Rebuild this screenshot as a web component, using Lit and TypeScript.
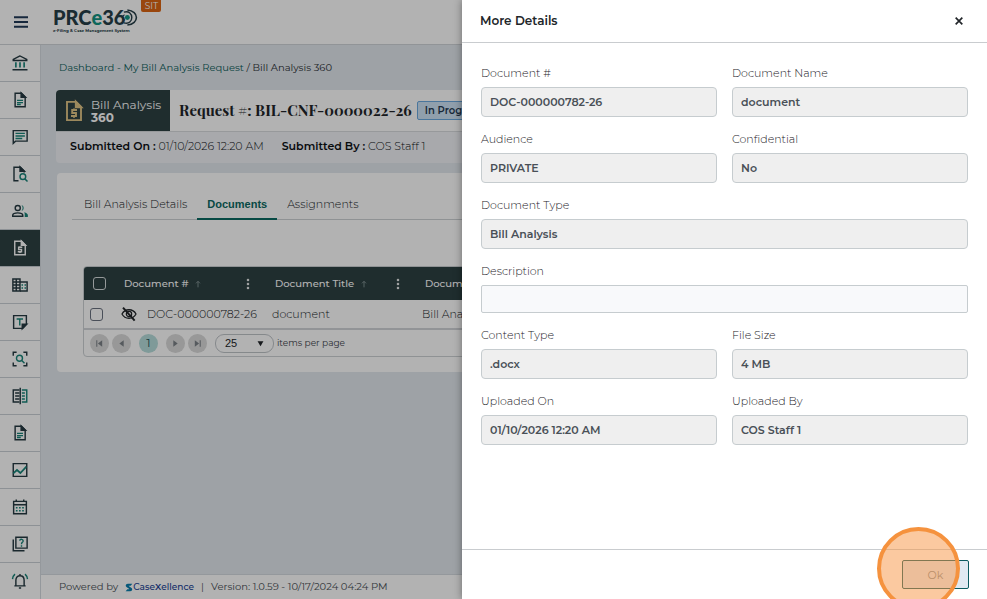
import { LitElement, html, svg, css, SVGTemplateResult } from "lit";
import { customElement, property } from "lit/decorators.js";
import { classMap } from "lit/directives/class-map.js";

const page = svg`<path d="M14 2.9H5.5V21.1H18.9V8z"/><path d="M13.5 2.5V8.5H19.5z" fill="currentColor"/>`;

const ICONS: Record<string, SVGTemplateResult> = {
  court: svg`<path d="M12 2.6 3 7.2V8.6H21V7.2z"/><path class="accent" d="M6.5 11V18M12 11V18M17.5 11V18" stroke-width="2.2"/><path d="M2 21H22" stroke-width="2"/>`,
  page: svg`${page}<path class="accent" d="M8 12.5H16M8 15.5H16M8 18H13"/>`,
  chat: svg`<path d="M3 3.5H21.5V17.5H6L3 20.5z"/><path class="accent" d="M6 7.2H18.5M6 10.6H18.5M6 14H15"/>`,
  pageSearch: svg`<path d="M10 21H4V3H12.5L17.5 8V10"/><path d="M12 2.5V8.5H18z" fill="currentColor"/><circle class="accent" cx="15.8" cy="15.5" r="3.8"/><path class="accent" d="M18.5 18.5 22 22"/>`,
  people: svg`<circle cx="9" cy="8" r="3.4"/><path d="M2.3 19V17.5C2.8 13.5 15.2 13.5 15.7 17.5V19z"/><path class="accentFill" d="M14 4a4.2 4.2 0 0 1 0 8c2-2.4 2-5.6 0-8zM17.5 13.5c3 .8 5 2 5 4.3V20H18.3V17.5c0-1.8 0-2.7-.8-4z"/>`,
  bill: svg`<path d="M14 2.9H5V21.1H19V8z"/><path d="M13.8 2.5V8.3H19.5z" fill="currentColor"/><path d="M15 11H10.2V14H14V17H9M12 9.5V11M12 17V18.7"/>`,
  building: svg`<path d="M2.5 4H12V20H2.5zM2.5 8H12M2.5 12H12M2.5 16H12M7 4V20"/><path d="M12 8H21.5V20H12"/><path class="accent" d="M14 12H16M18 12H20M14 16H16M18 16H20"/>`,
  note: svg`<path d="M3.5 3.5H20.5V15L15.5 20.5H3.5z"/><path d="M15 21V15H21z" fill="currentColor"/><path class="accent" d="M7.5 8H16M11.7 8V16.5"/>`,
  scan: svg`<path d="M3 7.5V3H7.5M16.5 3H21V7.5M21 16.5V21H16.5M7.5 21H3V16.5"/><circle class="accent" cx="11.3" cy="11" r="4"/><path class="accent" d="M14.3 14 18 17.7"/>`,
  compare: svg`<path d="M11 4H3V20H11M5.5 8H11M5.5 12H11M5.5 16H11M12.3 1V23"/><path class="accent" d="M14.5 4H21V20H14.5M14.5 8H18.5M14.5 12H18.5M14.5 16H18.5"/>`,
  chart: svg`<path d="M3 3.5H21V20.5H3z"/><path class="accent" d="M3 16.5 8 12 12.5 16 20.5 7.5" stroke-width="2.3"/>`,
  calendar: svg`<path d="M3.5 4.5H20.5V21H3.5zM3.5 9H20.5M7 2V5M17 2V5"/><path class="accent" d="M6.5 13H17.5M6.5 17H17.5" stroke-dasharray="2.2 2"/>`,
  help: svg`<path d="M6.5 3H21.5V17.5H6.5z"/><path d="M3 6V21H18"/><path class="accent" d="M11.5 7.5C12.5 4.5 17 5.7 16 8.7 15.3 10 14 10 14 12.2M14 13.7V15.5"/>`,
  bell: svg`<path d="M4.5 18.5H19.5M6.5 18V11C6.5 3 17.5 3 17.5 11V18M12 2.5V5M10.5 21.3H13.5"/><path class="accent" d="M2 9.5C2.2 6.5 3.3 4.5 5.3 2.8M22 9.5C21.8 6.5 20.7 4.5 18.7 2.8"/>`,
  hidden: svg`<path d="M1.5 12C6 3.5 18 3.5 22.5 12 18 20.5 6 20.5 1.5 12z"/><circle cx="12" cy="12" r="4"/><path d="M3 2.5 20.5 22" stroke-width="3"/>`,
  first: svg`<path d="M17 6 9 12 17 18z" fill="currentColor" stroke="none"/><path d="M7 6V18"/>`,
  prev: svg`<path d="M16 6 8 12 16 18z" fill="currentColor" stroke="none"/>`,
  next: svg`<path d="M8 6 16 12 8 18z" fill="currentColor" stroke="none"/>`,
  last: svg`<path d="M7 6 15 12 7 18z" fill="currentColor" stroke="none"/><path d="M17 6V18"/>`,
  down: svg`<path d="M2 4H22L12 21z" fill="currentColor" stroke="none"/>`,
  up: svg`<path d="M12 22V4M6 10 12 4 18 10" stroke-width="2.5"/>`,
  dots: svg`<circle cx="12" cy="4" r="1.7" fill="currentColor"/><circle cx="12" cy="12" r="1.7" fill="currentColor"/><circle cx="12" cy="20" r="1.7" fill="currentColor"/>`,
  menu: svg`<path d="M1.5 5H22.5M1.5 12H22.5M1.5 19H22.5" stroke-width="3"/>`,
  close: svg`<path d="M4 4 20 20M20 4 4 20" stroke-width="4"/>`,
  ring: svg`<circle class="accentFill" cx="9" cy="12" r="3.5"/><path d="M4 4.5C19 0 19 24 4 19.5" stroke-width="2"/><path d="M9 1.5C26 3 26 21 9 22.5" stroke-width="2.2"/><path d="M5 8C1 10 1 14 5 16" stroke-width="1.6"/>`,
  spark: svg`<path d="M22 1H9C3 1 1 6 3 9L7 13H17L11 7H17zM2 23H15C21 23 23 18 21 15L17 11H7L13 17H7z" fill="currentColor" stroke="none"/>`,
};

@customElement("ui-icon")
class UiIcon extends LitElement {
  @property() name = "";
  static styles = css`
    :host { display: inline-flex; width: 16px; height: 16px; flex: none; }
    svg { width: 100%; height: 100%; fill: none; stroke: currentColor; stroke-width: 1.9; }
    .accent { stroke: var(--accent, currentColor); }
    .accentFill { fill: var(--accent, currentColor); stroke: none; }
  `;
  render() {
    return html`<svg viewBox="0 0 24 24" aria-hidden="true">${ICONS[this.name]}</svg>`;
  }
}

interface Field { id: string; label: string; value: string; wide?: boolean; editable?: boolean; }

const FIELDS: Field[] = [
  { id: "doc-number", label: "Document #", value: "DOC-000000782-26" },
  { id: "doc-name", label: "Document Name", value: "document" },
  { id: "audience", label: "Audience", value: "PRIVATE" },
  { id: "confidential", label: "Confidential", value: "No" },
  { id: "doc-type", label: "Document Type", value: "Bill Analysis", wide: true },
  { id: "description", label: "Description", value: "", wide: true, editable: true },
  { id: "content-type", label: "Content Type", value: ".docx" },
  { id: "file-size", label: "File Size", value: "4 MB" },
  { id: "uploaded-on", label: "Uploaded On", value: "01/10/2026 12:20 AM" },
  { id: "uploaded-by", label: "Uploaded By", value: "COS Staff 1" },
];

@customElement("details-drawer")
class DetailsDrawer extends LitElement {
  static styles = css`
    :host { display: flex; flex-direction: column; background: #fff; color: #3d444b; box-shadow: 0 0 8px rgba(0, 0, 0, .4); }
    header { display: flex; align-items: center; justify-content: space-between; height: 42px; padding: 0 23px 0 18px; border-bottom: 1px solid #c9cccf; }
    h2 { margin: 0; font-size: 12px; font-weight: 600; color: #212529; }
    button { font: inherit; cursor: pointer; }
    .close { display: flex; padding: 0; border: 0; background: none; color: #212529; }
    .close ui-icon { width: 10px; height: 10px; }
    .fields { flex: 1; display: grid; grid-template-columns: 1fr 1fr; align-content: start; gap: 14px 15px; padding: 22px 19px; }
    .field { display: flex; flex-direction: column; gap: 6px; min-width: 0; }
    .wide { grid-column: 1 / -1; }
    label { font-size: 11px; font-weight: 300; line-height: 16px; color: #1c2228; }
    input { box-sizing: border-box; width: 100%; height: 30px; padding: 0 8px; border: 1px solid #c6cccf; border-radius: 4px; background: #efefef; font: 600 11px/16px var(--sans); color: #495057; }
    input.editable { height: 28px; border-radius: 2px; background: #f8f9fb; }
    footer { position: relative; display: flex; justify-content: flex-end; height: 39px; padding: 10px 18px 0; border-top: 1px solid #c9cccf; }
    .ok { width: 67px; height: 29px; border: 1px solid #0b5a60; border-radius: 2px; background: #e0e9f2; color: #7c8a92; font-size: 11px; }
    .click { position: absolute; right: 27px; top: -23px; box-sizing: border-box; width: 83px; height: 83px; border: 4px solid #f5923e; border-radius: 50%; background: rgba(247, 148, 66, .5); pointer-events: none; }
  `;
  render() {
    return html`
      <header>
        <h2 id="title">More Details</h2>
        <button class="close" aria-label="Close"><ui-icon name="close"></ui-icon></button>
      </header>
      <div class="fields">
        ${FIELDS.map((f) => html`
          <div class=${classMap({ field: true, wide: !!f.wide })}>
            <label for=${f.id}>${f.label}</label>
            <input id=${f.id} class=${classMap({ editable: !!f.editable })} .value=${f.value} ?readonly=${!f.editable} />
          </div>`)}
      </div>
      <footer><button class="ok">Ok</button><span class="click"></span></footer>
    `;
  }
}

const NAV = [
  ["court", "Courts"], ["page", "Filings"], ["chat", "Messages"], ["pageSearch", "Search filings"],
  ["people", "People"], ["bill", "Bill analysis"], ["building", "Organizations"], ["note", "Templates"],
  ["scan", "Scan"], ["compare", "Compare"], ["page", "Reports"], ["chart", "Statistics"],
  ["calendar", "Calendar"], ["help", "Help"], ["bell", "Notifications"],
];

@customElement("app-root")
class AppRoot extends LitElement {
  static styles = css`
    :host { --sans: Montserrat, Inter, "Open Sans", sans-serif; display: block; position: relative; height: 100vh; overflow: hidden; font: 400 12px/16px var(--sans); color: #2c3237; }
    a { color: inherit; text-decoration: none; }
    button { font: inherit; color: inherit; border: 0; padding: 0; background: none; cursor: pointer; }
    b { font-weight: 600; }
    .shell { height: 100%; display: flex; flex-direction: column; background: #e3e8ee; }
    .top { display: flex; flex: none; height: 44px; border-bottom: 1px solid #d0d4d8; background: #fff; }
    .menu { display: flex; align-items: center; justify-content: center; width: 41px; color: #223a58; }
    .brand { display: flex; flex-direction: column; padding: 6px 0 0 12px; color: #263e48; --accent: #149483; }
    .logo { display: flex; align-items: center; height: 22px; font: 900 20px/22px Lato, sans-serif; }
    .logo b { font-weight: 900; color: #149483; }
    .logo ui-icon { width: 17px; height: 17px; margin-left: -4px; }
    .tagline { font-size: 4px; line-height: 6px; font-weight: 700; }
    .env { align-self: flex-start; margin-left: 3px; width: 20px; height: 12px; border-radius: 0 0 2px 2px; background: #dc6514; color: #fff; font-size: 9px; line-height: 11px; text-align: center; }
    .frame { flex: 1; min-height: 0; display: flex; }
    nav { flex: none; width: 40px; overflow: hidden; background: #fff; border-right: 1px solid #d5dae0; --accent: #188479; }
    nav a { display: flex; align-items: center; justify-content: center; box-sizing: border-box; height: 37px; border-bottom: 1px solid #cbd0d6; color: #263a42; }
    nav a.active { background: #2d4143; color: #fff; --accent: #fff; }
    nav ui-icon { width: 18px; height: 18px; }
    .main { flex: 1; min-width: 0; display: flex; flex-direction: column; }
    main { flex: 1; padding: 14px 15px 0; }
    .crumbs { font-size: 10px; line-height: 17px; padding-left: 3px; }
    .crumbs a { color: #0b5f5b; }
    .banner { margin-top: 14px; border-radius: 4px; overflow: hidden; background: #f1f3f7; }
    .heading { display: flex; height: 41px; border-bottom: 1px solid #d9dcdf; background: #fff; }
    .badge { display: flex; align-items: center; gap: 5px; box-sizing: border-box; width: 114px; padding-left: 6px; background: #2d4143; color: #fff; font-size: 12px; line-height: 13px; }
    .badge b { display: block; font-weight: 700; }
    .badge ui-icon { width: 24px; height: 26px; color: #e0c486; }
    h1 { margin: 0; padding: 0 5px 0 9px; font: 700 15px/41px "Playfair Display", "Liberation Serif", serif; color: #212529; white-space: nowrap; }
    .status { align-self: center; box-sizing: border-box; height: 19px; padding: 0 7px; border: 1px solid #6aa9e0; border-radius: 2px; background: #cfe4f7; font-size: 10px; line-height: 17px; font-weight: 600; color: #263a52; white-space: nowrap; }
    .meta { display: flex; gap: 18px; padding: 6px 14px 9px; font-size: 11px; font-weight: 300; line-height: 16px; color: #0c1014; }
    .card { margin: 10px 0 0 1px; padding: 15px 26px 15px 15px; border-radius: 4px; background: #fff; }
    .tabs { display: flex; padding-left: 2px; border-bottom: 1px solid #cdd1d5; }
    .tabs button { height: 31px; padding: 0 10px; font-size: 11px; font-weight: 300; color: #14191d; }
    .tabs .on { margin-bottom: -1px; height: 32px; padding-top: 2px; border-bottom: 2px solid #0b6a62; font: 700 11px/16px "Liberation Sans", sans-serif; color: #0b6a62; }
    .grid { margin: 46px 0 0 11px; border: 1px solid #cdd1d5; border-radius: 4px; overflow: hidden; }
    table { width: 100%; table-layout: fixed; border-collapse: collapse; }
    th, td { box-sizing: border-box; }
    .pick { width: 31px; }
    .number { width: 151px; }
    .title { width: 150px; }
    th { height: 33px; padding: 0 12px 0 9px; background: #2d4143; color: #fff; font-size: 10px; font-weight: 500; text-align: left; }
    td { height: 29px; padding: 0 6px; border-bottom: 2px solid #d2d5d8; font-size: 11px; font-weight: 300; white-space: nowrap; color: #14191d; }
    .head, .doc { display: flex; align-items: center; gap: 6px; }
    .head button { display: flex; margin-left: auto; }
    .head ui-icon { width: 12px; height: 12px; }
    .head .sort { width: 8px; height: 8px; color: #8b9c9d; }
    .doc { gap: 10px; }
    .doc ui-icon { color: #212529; }
    .pick input { display: block; appearance: none; box-sizing: border-box; width: 13px; height: 13px; margin: 0; border: 1px solid #6b7280; border-radius: 3px; background: #fff; }
    th.pick input { border-color: #d6dcdd; background: transparent; }
    .pager { display: flex; align-items: center; height: 26px; padding: 0 6px; gap: 3px; font-size: 9px; color: #3d444b; }
    .pager button { display: flex; align-items: center; justify-content: center; width: 19px; height: 19px; border-radius: 50%; background: #dadada; color: #7c8287; }
    .pager button ui-icon { width: 13px; height: 13px; }
    .pager .current { margin: 0 5px; background: #b6dddb; color: #22565a; font-size: 12px; }
    .size { position: relative; display: flex; align-items: center; margin-left: 5px; }
    .size select { appearance: none; box-sizing: border-box; width: 59px; height: 19px; padding: 0 9px; border: 1px solid #bfc4c8; border-radius: 9px; background: #fff; font: 11px/16px "Liberation Sans", sans-serif; color: #212529; }
    .size ui-icon { position: absolute; right: 10px; width: 7px; height: 7px; color: #212529; pointer-events: none; }
    .bottom { display: flex; align-items: center; gap: 7px; height: 24px; padding: 0 18px; background: #fff; border-top: 1px solid #d5dae0; font-size: 10px; color: #4a5057; }
    .vendor { display: flex; align-items: center; font-size: 9px; font-weight: 500; color: #1a3f96; }
    .vendor ui-icon { width: 8px; height: 11px; color: #087fae; }
    .scrim { position: absolute; inset: 0; background: rgba(0, 0, 0, .3); }
    details-drawer { position: absolute; top: 0; right: 0; bottom: 0; width: 525px; max-width: 100%; }
  `;
  render() {
    return html`
      <div class="shell">
        <div class="top">
          <button class="menu" aria-label="Menu"><ui-icon name="menu"></ui-icon></button>
          <div class="brand">
            <div class="logo">PRC<b>e</b>36<ui-icon name="ring"></ui-icon></div>
            <div class="tagline">e-Filing &amp; Case Management System</div>
          </div>
          <span class="env">SIT</span>
        </div>
        <div class="frame">
          <nav>
            ${NAV.map(([icon, label]) => html`
              <a href="#" aria-label=${label} class=${classMap({ active: icon === "bill" })}><ui-icon name=${icon}></ui-icon></a>`)}
          </nav>
          <div class="main">
            <main>
              <div class="crumbs"><a href="#">Dashboard - My Bill Analysis Request</a> / Bill Analysis 360</div>
              <section class="banner">
                <div class="heading">
                  <div class="badge"><ui-icon name="bill"></ui-icon><span>Bill Analysis <b>360</b></span></div>
                  <h1>Request #: BIL-CNF-0000022-26</h1>
                  <span class="status">In Progress</span>
                </div>
                <div class="meta">
                  <span><b>Submitted On :</b> 01/10/2026 12:20 AM</span>
                  <span><b>Submitted By :</b> COS Staff 1</span>
                </div>
              </section>
              <section class="card">
                <div class="tabs">
                  <button>Bill Analysis Details</button>
                  <button class="on">Documents</button>
                  <button>Assignments</button>
                </div>
                <div class="grid">
                  <table>
                    <thead>
                      <tr>
                        <th class="pick"><input type="checkbox" aria-label="Select all" /></th>
                        ${[["number", "Document #"], ["title", "Document Title"], ["", "Document Type"]].map(([cls, text]) => html`
                          <th class=${cls}>
                            <div class="head">${text}<ui-icon class="sort" name="up"></ui-icon>
                              <button aria-label="Column menu"><ui-icon name="dots"></ui-icon></button></div>
                          </th>`)}
                      </tr>
                    </thead>
                    <tbody>
                      <tr>
                        <td class="pick"><input type="checkbox" aria-label="Select document" /></td>
                        <td><div class="doc"><ui-icon name="hidden"></ui-icon>DOC-000000782-26</div></td>
                        <td>document</td>
                        <td>Bill Analysis</td>
                      </tr>
                    </tbody>
                  </table>
                  <div class="pager">
                    <button aria-label="First page"><ui-icon name="first"></ui-icon></button>
                    <button aria-label="Previous page"><ui-icon name="prev"></ui-icon></button>
                    <button class="current">1</button>
                    <button aria-label="Next page"><ui-icon name="next"></ui-icon></button>
                    <button aria-label="Last page"><ui-icon name="last"></ui-icon></button>
                    <span class="size">
                      <select id="size"><option>25</option></select><ui-icon name="down"></ui-icon>
                    </span>
                    <label for="size">items per page</label>
                  </div>
                </div>
              </section>
            </main>
            <div class="bottom">
              <span>Powered by</span>
              <a class="vendor" href="#"><ui-icon name="spark"></ui-icon><span>Case<b>X</b>ellence</span></a>
              <span>|</span>
              <span>Version: 1.0.59 - 10/17/2024 04:24 PM</span>
            </div>
          </div>
        </div>
      </div>
      <div class="scrim"></div>
      <details-drawer role="dialog" aria-label="More Details"></details-drawer>
    `;
  }
}
